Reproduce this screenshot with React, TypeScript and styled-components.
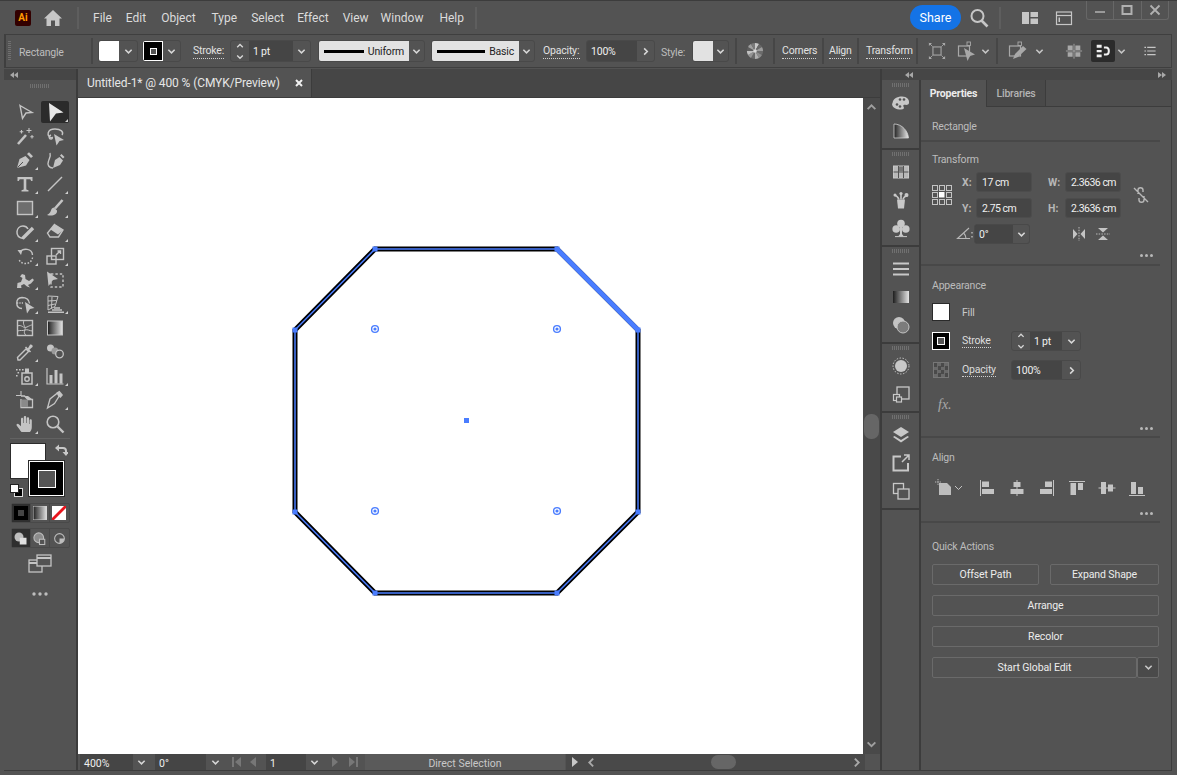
import React from "react";
import styled, { createGlobalStyle, css } from "styled-components";

const Global = createGlobalStyle`
  html, body { margin: 0; padding: 0; background: #535353; overflow: hidden; }
  #root { width: 1177px; height: 775px; }
  * { box-sizing: border-box; }
`;

const spaced = css<{ $ml?: number }>`
  margin-left: ${(p) => p.$ml ?? 0}px;
  flex: none;
`;

const Root = styled.div`
  width: 1177px;
  height: 775px;
  background: #535353;
  font-family: Roboto, "Liberation Sans", sans-serif;
  font-size: 10.5px;
  color: #cfcfcf;
  display: flex;
  flex-direction: column;
  border-top: 1px solid #3c3c3c;
  overflow: hidden;
`;

/* ---------- title bar ---------- */
const TitleBar = styled.header`
  height: 33px;
  flex: none;
  display: flex;
  align-items: center;
  position: relative;
`;
const AiLogo = styled.div`
  ${spaced};
  width: 16px;
  height: 16px;
  background: #330000;
  border-radius: 2px;
  color: #ff9a00;
  font-size: 10px;
  font-weight: 700;
  display: flex;
  align-items: center;
  justify-content: center;
`;
const TitleSep = styled.div<{ $ml?: number }>`
  ${spaced};
  width: 2px;
  height: 22px;
  background: #5e5e5e;
`;
const MenuItem = styled.span<{ $ml?: number }>`
  ${spaced};
  font-size: 12px;
  color: #dcdcdc;
`;
const ShareButton = styled.div<{ $ml?: number }>`
  ${spaced};
  width: 51px;
  height: 25px;
  border-radius: 13px;
  background: #1473e6;
  color: #fff;
  font-size: 12.5px;
  display: flex;
  align-items: center;
  justify-content: center;
`;
const WindowControls = styled.div`
  position: absolute;
  right: 8px;
  top: -1px;
  width: 83px;
  height: 20px;
  display: flex;
  border: 1px solid #676767;
  border-top: none;
  border-radius: 0 0 3px 3px;
`;
const WindowButton = styled.div`
  flex: 1;
  display: flex;
  align-items: center;
  justify-content: center;
  & + & { border-left: 1px solid #676767; }
`;

/* ---------- control bar ---------- */
const ControlBar = styled.div`
  height: 34px;
  flex: none;
  margin: 0 5px 0 4px;
  border: 1px solid #3f3f3f;
  border-left-width: 2px;
  display: flex;
  align-items: center;
`;
const Grip = styled.div<{ $ml?: number }>`
  ${spaced};
  width: 3px;
  height: 20px;
  background: repeating-linear-gradient(to bottom, #707070 0 1px, transparent 1px 2px);
`;
const BarLabel = styled.span<{ $ml?: number; $w?: number }>`
  ${spaced};
  width: ${(p) => (p.$w ? `${p.$w}px` : "auto")};
  margin-top: 2px;
  color: #bdbdbd;
  white-space: nowrap;
  letter-spacing: -0.2px;
`;
const LinkLabel = styled.span<{ $ml?: number; $w?: number }>`
  ${spaced};
  width: ${(p) => (p.$w ? `${p.$w}px` : "auto")};
  margin-top: 2px;
  color: #e2e2e2;
  white-space: nowrap;
  letter-spacing: -0.2px;
  line-height: 12px;
  padding-bottom: 1px;
  border-bottom: 1px dotted #d0d0d0;
`;
const BarSep = styled.div<{ $ml?: number }>`
  ${spaced};
  width: 2px;
  height: 26px;
  background: #464646;
`;
const Combo = styled.div<{ $ml?: number; $w: number; $h?: number }>`
  ${spaced};
  width: ${(p) => p.$w}px;
  height: ${(p) => p.$h ?? 22}px;
  border: 1px solid #494949;
  border-radius: 3px;
  display: flex;
  align-items: stretch;
  overflow: hidden;
`;
const ComboSwatch = styled.div<{ $bg: string; $w: number }>`
  width: ${(p) => p.$w}px;
  flex: none;
  background: ${(p) => p.$bg};
  display: flex;
  align-items: center;
  justify-content: center;
`;
const StrokeSwatch = styled.div`
  width: 20px;
  flex: none;
  background: #000;
  border: 1px solid #fff;
  display: flex;
  align-items: center;
  justify-content: center;
  & > i {
    display: block;
    width: 7px;
    height: 7px;
    border: 1.5px solid #fff;
    background: #555;
  }
`;
const ComboArrow = styled.div`
  flex: 1;
  min-width: 0;
  display: flex;
  align-items: center;
  justify-content: center;
  color: #d8d8d8;
  & + & { border-left: 1px solid #494949; }
`;
const ComboInput = styled.div<{ $w?: number }>`
  ${(p) => (p.$w ? `width:${p.$w}px; flex:none;` : "flex:1;")}
  background: #454545;
  color: #f0f0f0;
  padding-left: 4px;
  display: flex;
  align-items: center;
  white-space: nowrap;
  letter-spacing: -0.2px;
`;
const Stepper = styled.div`
  width: 18px;
  flex: none;
  display: flex;
  flex-direction: column;
  align-items: center;
  justify-content: center;
  gap: 3px;
  color: #d8d8d8;
`;
const ProfileBox = styled.div<{ $w: number }>`
  width: ${(p) => p.$w}px;
  flex: none;
  background: #e2e2e2;
  color: #1e1e1e;
  display: flex;
  align-items: center;
  padding: 0 5px;
  gap: 4px;
  letter-spacing: -0.2px;
  & > b {
    display: block;
    flex: 1;
    height: 3px;
    background: #000;
  }
`;
const BarIcon = styled.div<{ $ml?: number; $w?: number; $active?: boolean; $color?: string }>`
  ${spaced};
  width: ${(p) => p.$w ?? 20}px;
  height: 22px;
  display: flex;
  align-items: center;
  justify-content: center;
  color: ${(p) => p.$color ?? "#c6c6c6"};
  border-radius: 2px;
  background: ${(p) => (p.$active ? "#2b2b2b" : "transparent")};
`;

/* ---------- main ---------- */
const Main = styled.div`
  flex: 1;
  min-height: 0;
  margin: 1px 5px 4px 4px;
  display: flex;
  border-bottom: 1px solid #3c3c3c;
`;
const Toolbox = styled.aside`
  width: 72px;
  flex: none;
  display: flex;
  flex-direction: column;
  align-items: center;
  position: relative;
`;
const Strip = styled.div<{ $justify?: string; $pad?: string }>`
  height: 11px;
  flex: none;
  align-self: stretch;
  background: #464646;
  display: flex;
  align-items: center;
  justify-content: ${(p) => p.$justify ?? "flex-start"};
  padding: ${(p) => p.$pad ?? "0"};
  color: #a8a8a8;
`;
const HGrip = styled.div`
  width: 20px;
  height: 4px;
  margin-top: 4px;
  flex: none;
  background: repeating-linear-gradient(to right, #707070 0 1px, transparent 1px 2px);
`;
const ToolGrid = styled.div`
  margin-top: 12px;
  display: grid;
  grid-template-columns: 30px 30px;
  grid-auto-rows: 24px;
  flex: none;
`;
const Tool = styled.div<{ $active?: boolean; $corner?: boolean }>`
  position: relative;
  display: flex;
  align-items: center;
  justify-content: center;
  color: #c4c4c4;
  border-radius: 2px;
  background: ${(p) => (p.$active ? "#2b2b2b" : "transparent")};
  margin: ${(p) => (p.$active ? "1px 1px" : "0")};
  &::after {
    content: "";
    display: ${(p) => (p.$corner ? "block" : "none")};
    position: absolute;
    right: ${(p) => (p.$active ? "1px" : "2px")};
    bottom: ${(p) => (p.$active ? "1px" : "2px")};
    border-style: solid;
    border-width: 0 0 3px 3px;
    border-color: transparent transparent #cfcfcf transparent;
  }
`;
const ToolDivider = styled.div`
  width: 60px;
  height: 1px;
  margin-top: 2px;
  background: #626262;
  flex: none;
`;
const SwatchArea = styled.div`
  width: 60px;
  height: 55px;
  margin-top: 4px;
  position: relative;
  flex: none;
`;
const FillBig = styled.div`
  position: absolute;
  left: 0;
  top: 0;
  width: 36px;
  height: 36px;
  background: #fff;
  border: 1px solid #2c2c2c;
`;
const StrokeBig = styled.div`
  position: absolute;
  left: 19px;
  top: 18px;
  width: 35px;
  height: 35px;
  background: #000;
  border: 1px solid #fff;
  outline: 1px solid #2c2c2c;
  display: flex;
  align-items: center;
  justify-content: center;
  & > i {
    display: block;
    width: 18px;
    height: 18px;
    background: #555;
    border: 1px solid #fff;
  }
`;
const SwapIcon = styled.div`
  position: absolute;
  left: 44px;
  top: 0;
  color: #c8c8c8;
`;
const DefaultIcon = styled.div`
  position: absolute;
  left: 0;
  top: 41px;
`;
const ModeRow = styled.div<{ $mt: number }>`
  margin-top: ${(p) => p.$mt}px;
  width: 59px;
  height: 20px;
  display: flex;
  border: 1px solid #494949;
  border-radius: 2px;
  flex: none;
`;
const ModeCell = styled.div<{ $active?: boolean }>`
  flex: 1;
  display: flex;
  align-items: center;
  justify-content: center;
  color: #bdbdbd;
  background: ${(p) => (p.$active ? "#2f2f2f" : "transparent")};
  & + & { border-left: 1px solid #494949; }
`;
const Centered = styled.div<{ $mt: number; $color?: string }>`
  margin-top: ${(p) => p.$mt}px;
  flex: none;
  display: flex;
  color: ${(p) => p.$color ?? "#c4c4c4"};
`;

const Document = styled.main`
  width: 806px;
  flex: none;
  display: flex;
  flex-direction: column;
  border-left: 2px solid #3c3c3c;
  border-right: 2px solid #3c3c3c;
`;
const TabStrip = styled.div`
  height: 29px;
  flex: none;
  background: #464646;
  display: flex;
  border-bottom: 1px solid #3c3c3c;
`;
const DocTab = styled.div`
  width: 234px;
  background: #535353;
  display: flex;
  align-items: center;
  padding: 0 8px 0 9px;
  justify-content: space-between;
  color: #e6e6e6;
  font-size: 12px;
  letter-spacing: -0.1px;
  border-right: 1px solid #3c3c3c;
  white-space: nowrap;
`;
const CanvasRow = styled.div`
  flex: 1;
  min-height: 0;
  display: flex;
`;
const Canvas = styled.div`
  width: 785px;
  background: #fff;
  flex: none;
  & > svg { display: block; }
`;
const VScroll = styled.div`
  flex: 1;
  background: #494949;
  position: relative;
  color: #a0a0a0;
  display: flex;
  flex-direction: column;
  align-items: center;
  justify-content: space-between;
  padding: 4px 0;
`;
const VThumb = styled.div`
  position: absolute;
  left: 1px;
  top: 316px;
  width: 15px;
  height: 25px;
  border-radius: 7px;
  background: #666;
`;
const StatusBar = styled.div`
  height: 16px;
  flex: none;
  display: flex;
  align-items: stretch;
  background: #494949;
`;
const StatusLeft = styled.div`
  width: 488px;
  flex: none;
  background: #535353;
  display: flex;
  align-items: stretch;
`;
const StatusField = styled.div<{ $ml?: number; $w: number }>`
  ${spaced};
  width: ${(p) => p.$w}px;
  background: #454545;
  color: #efefef;
  padding: 3px 0 0 4px;
  display: flex;
  align-items: center;
`;
const StatusArrow = styled.div<{ $ml?: number; $w?: number; $color?: string }>`
  ${spaced};
  width: ${(p) => p.$w ?? 16}px;
  display: flex;
  align-items: center;
  justify-content: center;
  color: ${(p) => p.$color ?? "#d6d6d6"};
`;
const StatusText = styled.div<{ $ml?: number }>`
  ${spaced};
  width: 200px;
  background: #5a5a5a;
  padding-top: 3px;
  display: flex;
  align-items: center;
  justify-content: center;
  color: #c8c8c8;
`;
const HScroll = styled.div`
  flex: 1;
  position: relative;
  display: flex;
  align-items: center;
  justify-content: space-between;
  padding: 0 3px 0 2px;
  color: #a8a8a8;
`;
const HThumb = styled.div`
  position: absolute;
  left: 127px;
  top: 1px;
  width: 25px;
  height: 14px;
  border-radius: 7px;
  background: #666;
`;
const StatusCorner = styled.div`
  width: 15px;
  flex: none;
  background: #535353;
`;

/* ---------- right ---------- */
const RightCol = styled.div`
  flex: 1;
  min-width: 0;
  display: flex;
  flex-direction: column;
`;
const RightBody = styled.div`
  flex: 1;
  min-height: 0;
  display: flex;
`;
const Dock = styled.div`
  width: 37px;
  flex: none;
  padding-top: 1px;
  border-right: 2px solid #3c3c3c;
  box-sizing: content-box;
  display: flex;
  flex-direction: column;
`;
const DockGroup = styled.div`
  display: flex;
  flex-direction: column;
  align-items: center;
  padding-bottom: 3px;
  border-bottom: 2px solid #3c3c3c;
  & > ${HGrip} { margin-top: 2px; margin-bottom: 2px; width: 18px; height: 4px; }
`;
const DockIcon = styled.div`
  width: 100%;
  height: 28px;
  display: flex;
  align-items: center;
  justify-content: center;
  color: #c8c8c8;
`;
const Panel = styled.section`
  flex: 1;
  min-width: 0;
  display: flex;
  flex-direction: column;
  border-right: 1px solid #3c3c3c;
`;
const Tabs = styled.div`
  height: 27px;
  flex: none;
  display: flex;
  background: #4e4e4e;
  border-bottom: 1px solid #3c3c3c;
`;
const PanelTab = styled.div<{ $active?: boolean; $w: number }>`
  width: ${(p) => p.$w}px;
  height: ${(p) => (p.$active ? "27px" : "26px")};
  background: ${(p) => (p.$active ? "#535353" : "#494949")};
  color: ${(p) => (p.$active ? "#ececec" : "#b4b4b4")};
  font-weight: ${(p) => (p.$active ? 700 : 500)};
  letter-spacing: -0.2px;
  border-right: 1px solid #3c3c3c;
  display: flex;
  align-items: center;
  justify-content: center;
`;
const Section = styled.div<{ $h: number; $last?: boolean }>`
  height: ${(p) => p.$h}px;
  flex: none;
  margin-right: 11px;
  padding: 0 0 0 11px;
  border-bottom: ${(p) => (p.$last ? "none" : "2px solid #484848")};
  position: relative;
`;
const SectionTitle = styled.div<{ $top: number }>`
  padding-top: ${(p) => p.$top}px;
  height: ${(p) => p.$top + 13}px;
  line-height: 13px;
  color: #bcbcbc;
  letter-spacing: -0.2px;
`;
const TransformGrid = styled.div`
  margin-top: 6px;
  display: grid;
  grid-template-columns: 30px 14px 56px 16px 17px 56px 1fr;
  grid-template-rows: 20px 20px 20px;
  row-gap: 6px;
`;
const GridIcon = styled.div<{ $col: string; $row: string; $justify?: string }>`
  grid-column: ${(p) => p.$col};
  grid-row: ${(p) => p.$row};
  display: flex;
  align-items: center;
  justify-content: ${(p) => p.$justify ?? "flex-start"};
  gap: 10px;
  color: #c4c4c4;
`;
const FieldLabel = styled.div<{ $col: number; $row: number }>`
  grid-column: ${(p) => p.$col};
  grid-row: ${(p) => p.$row};
  display: flex;
  align-items: center;
  font-weight: 700;
  font-size: 10.5px;
  color: #b8b8b8;
`;
const Field = styled.div<{ $col: number; $row: number }>`
  grid-column: ${(p) => p.$col};
  grid-row: ${(p) => p.$row};
  background: #454545;
  border: 1px solid #4c4c4c;
  border-radius: 3px;
  color: #efefef;
  display: flex;
  align-items: center;
  padding-left: 5px;
  white-space: nowrap;
  letter-spacing: -0.5px;
`;
const AngleCombo = styled(Combo)`
  grid-column: 3;
  grid-row: 3;
  margin-left: -2px;
  height: 20px;
  background: #454545;
`;
const AngleArrow = styled(ComboArrow)`
  background: #535353;
`;
const DotsRow = styled.div<{ $b?: number }>`
  position: absolute;
  right: 7px;
  bottom: ${(p) => p.$b ?? 7}px;
  display: flex;
  gap: 2px;
  & > i {
    display: block;
    width: 3px;
    height: 3px;
    border-radius: 50%;
    background: #b8b8b8;
  }
`;
const PropRow = styled.div<{ $mt: number }>`
  margin-top: ${(p) => p.$mt}px;
  height: 20px;
  display: flex;
  align-items: center;
`;
const PropSwatch = styled.div`
  width: 18px;
  height: 18px;
  flex: none;
  background: #fff;
  border: 1px solid #2a2a2a;
`;
const PropStroke = styled.div`
  width: 18px;
  height: 18px;
  flex: none;
  background: #000;
  border: 1px solid #fff;
  display: flex;
  align-items: center;
  justify-content: center;
  & > i {
    display: block;
    width: 8px;
    height: 8px;
    background: #555;
    border: 1px solid #fff;
  }
`;
const Checker = styled.div`
  width: 16px;
  height: 16px;
  margin: 0 1px;
  flex: none;
  border: 1px solid #777;
  background: repeating-conic-gradient(#6a6a6a 0 25%, #4a4a4a 0 50%) 0 0 / 7px 7px;
`;
const PropName = styled.span<{ $ml: number; $w: number }>`
  margin-left: ${(p) => p.$ml}px;
  width: ${(p) => p.$w}px;
  color: #c8c8c8;
  letter-spacing: -0.2px;
  flex: none;
`;
const PropLink = styled.div<{ $ml: number; $w: number }>`
  margin-left: ${(p) => p.$ml}px;
  width: ${(p) => p.$w}px;
  flex: none;
  & > span {
    color: #dcdcdc;
    letter-spacing: -0.2px;
    line-height: 12px;
    border-bottom: 1px dotted #d0d0d0;
    display: inline-block;
  }
`;
const FxMark = styled.div`
  margin: 16px 0 0 6px;
  font-family: "Liberation Serif", serif;
  font-style: italic;
  font-size: 14px;
  color: #a8a8a8;
  line-height: 18px;
`;
const AlignRow = styled.div`
  margin-top: 14px;
  display: flex;
  align-items: center;
  color: #c4c4c4;
`;
const AlignIcon = styled.div<{ $w: number }>`
  width: ${(p) => p.$w}px;
  flex: none;
  display: flex;
  align-items: center;
  justify-content: center;
`;
const ActionGrid = styled.div`
  margin-top: 11px;
  width: 227px;
  display: grid;
  grid-template-columns: 107px 109px;
  column-gap: 11px;
  row-gap: 10px;
`;
const ActionButton = styled.div<{ $wide?: boolean }>`
  height: 21px;
  grid-column: ${(p) => (p.$wide ? "1 / -1" : "auto")};
  border: 1px solid #6a6a6a;
  border-radius: 2px;
  color: #ececec;
  display: flex;
  align-items: center;
  justify-content: center;
  letter-spacing: -0.1px;
`;
const SplitButton = styled.div`
  grid-column: 1 / -1;
  height: 21px;
  display: flex;
  color: #ececec;
`;
const SplitMain = styled(ActionButton)`
  flex: 1;
`;
const SplitArrow = styled.div`
  width: 22px;
  flex: none;
  border: 1px solid #6a6a6a;
  border-radius: 2px;
  background: #4a4a4a;
  color: #c8c8c8;
  display: flex;
  align-items: center;
  justify-content: center;
`;

/* ---------- small drawings ---------- */
type Dir = "down" | "up" | "left" | "right";
const Chev = ({ dir = "down", s = 9 }: { dir?: Dir; s?: number }) => {
  const pts = {
    down: "1.5,3 5,6.5 8.5,3",
    up: "1.5,6.5 5,3 8.5,6.5",
    left: "6.5,1.5 3,5 6.5,8.5",
    right: "3.5,1.5 7,5 3.5,8.5",
  }[dir];
  return (
    <svg width={s} height={s} viewBox="0 0 10 10" fill="none" stroke="currentColor" strokeWidth="1.7">
      <polyline points={pts} />
    </svg>
  );
};
const Double = ({ left }: { left?: boolean }) => (
  <svg width="8" height="6" viewBox="0 0 8 6" fill="currentColor">
    {left ? <path d="M4 0V6L0 3ZM8 0V6L4 3Z" /> : <path d="M0 0V6L4 3ZM4 0V6L8 3Z" />}
  </svg>
);
const Dots = ({ b }: { b?: number }) => (
  <DotsRow $b={b}>
    <i />
    <i />
    <i />
  </DotsRow>
);
const I = ({ children, s = 20 }: { children: React.ReactNode; s?: number }) => (
  <svg
    width={s}
    height={s}
    viewBox="0 0 20 20"
    fill="none"
    stroke="currentColor"
    strokeWidth="1.4"
    style={{ display: "block", flex: "none" }}
  >
    {children}
  </svg>
);
const F = { fill: "currentColor", stroke: "none" } as const;

const toolIcons: Record<string, React.ReactNode> = {
  select: <path d="M5 3.5 17 10.5 11 11 7.5 16.5Z" />,
  direct: <path d="M4 1 18.5 10.5 11 11.5 5 19.5Z" fill="#e8e8e8" stroke="none" />,
  wand: (
    <>
      <path d="M3 18 11 9" strokeWidth="2.6" />
      <path d="M14 2v5M11.5 4.5h5M6.5 4v3.6M4.7 5.8h3.6M17 9v3.4M15.3 10.7h3.4" strokeWidth="1.1" />
    </>
  ),
  lasso: (
    <>
      <path d="M7 12C1 10 2 3 10 3c6 0 9 3 7 6" />
      <path d="M6 9c-3 1-2 4 0 4 1 0 2-1 1-2" />
      <path d="M9 8 19 14 14.5 15 11.5 19.5Z" {...F} />
    </>
  ),
  pen: (
    <>
      <path d="M2 18 4.5 9 10.5 6 14.5 10 11 15.5Z" {...F} />
      <path d="M12 4 14 2.2 18 6.2 16 8Z" {...F} />
      <path d="M2.5 17.5 8 12" stroke="#535353" strokeWidth="1" />
    </>
  ),
  curvature: (
    <>
      <path d="M8 18 10 10 14.5 7 18 10.5 15 15Z" {...F} />
      <path d="M15 5.5 16.5 4 19.5 7 18 8.5Z" {...F} />
      <path d="M8 18C4 18 2 15 3.5 11 4.5 8 6 6 5 3" />
    </>
  ),
  type: <path d="M2.5 3H17.5V7H16.2L15.3 5.2H11.3V15.6L13.5 16.2V17.5H6.5V16.2L8.7 15.6V5.2H4.7L3.8 7H2.5Z" {...F} />,
  line: <path d="M3 17 17 3" />,
  rect: <rect x="2.5" y="3.5" width="15" height="13" fill="#6e6e6e" />,
  brush: (
    <>
      <path d="M17.5 2 10 10.5" strokeWidth="2.6" />
      <path d="M9 9.5C5 10 7 15 2 17 7 18.5 12.5 17 12 12.5Z" {...F} />
    </>
  ),
  shaper: (
    <>
      <path d="M8 16.5C-1 15 1 4 8 4c2 0 4 1 5 3" strokeWidth="1.5" />
      <path d="M7.5 16.5 18 6" strokeWidth="3.4" />
    </>
  ),
  eraser: (
    <>
      <path d="M9.5 2.5 18 8 13.5 15 5 15 2.5 11Z" />
      <path d="M9.5 2.5 18 8 13 12.5 5.5 7.5Z" {...F} />
    </>
  ),
  rotate: (
    <>
      <path d="M5 6C8 2 17 2 17.5 9" />
      <path d="M17.5 11.5c-.5 4-4 6.5-8 6-3-.5-5-2-6-5" strokeDasharray="1.6 1.6" />
      <path d="M2.5 4 7.5 4 6 9Z" {...F} />
    </>
  ),
  scale: (
    <>
      <rect x="2" y="10" width="9" height="8" />
      <rect x="6.5" y="2.5" width="12" height="11" />
      <path d="M11 9 15 5M12.5 5H15.5V8" />
    </>
  ),
  warp: (
    <path
      d="M2 18 2.5 13 6 12 7.5 8 5 6.5 7 4 10 5 10.5 9 14 11 17.5 8.5 19 10 16 13.5 13 15 15 17.5 12 16.5 9 14 6 15.5 6.5 18Z"
      {...F}
    />
  ),
  free: (
    <>
      <rect x="6" y="4" width="12" height="13" strokeDasharray="2.4 2" />
      <path d="M2 1.5 13 9 8 10 3.5 16Z" {...F} />
    </>
  ),
  shapeb: (
    <>
      <path d="M7 14.5C0 14 0 4 7 3.5c4 0 7 2 7.5 6" />
      <path d="M2 9H9" strokeDasharray="1.2 1.2" />
      <path d="M10 8 19.5 14 15 15 12 19.5Z" {...F} />
    </>
  ),
  persp: (
    <>
      <path d="M3 2V16L10 12.5 13 2.5ZM3 7 11.5 6.5M3 11.5 10 10M7 3 6.5 14.5" strokeWidth="1" />
      <path d="M9 14H15M7 16H17M3 18.2H19" strokeWidth="1.5" />
    </>
  ),
  mesh: (
    <>
      <rect x="2.5" y="2.5" width="15" height="15" />
      <path d="M2.5 8C7 6 8 11 12 9s4-2 5.5-2M9 2.5c-2 4 2 6 1 9S9 15 11 17.5M2.5 13c3-1 5 0 7.5-1s5 1 7.5 1" strokeWidth="1" />
    </>
  ),
  gradient: <rect x="2.5" y="3" width="15" height="14" fill="url(#gr)" stroke="#c4c4c4" strokeWidth="1" />,
  dropper: (
    <>
      <path d="M3 18 2.5 15.5 11 7 13.5 9.5 5 18Z" />
      <path d="M11 5.5 12.5 7 15 2.8C16 1.6 18.5 3.5 17.5 5L13.5 8.5 15 10" {...F} />
      <path d="M10.5 5 15.5 10" strokeWidth="1.6" />
    </>
  ),
  blend: (
    <>
      <circle cx="5.5" cy="6" r="3.5" {...F} />
      <circle cx="10" cy="9" r="3.5" fill="#9a9a9a" stroke="none" />
      <circle cx="14.5" cy="12" r="3.8" fill="#535353" strokeWidth="1.3" />
    </>
  ),
  spray: (
    <>
      <path d="M7 7H17V18H7Z" strokeWidth="1.5" />
      <circle cx="12" cy="13" r="2.2" strokeWidth="1.4" />
      <path d="M10 2.5h4V7H10Z" {...F} />
      <path d="M1 3h1.6v1.6H1ZM4 3h1.6v1.6H4ZM7 3h1.6v1.6H7ZM2.5 6h1.6v1.6H2.5ZM1 9h1.6v1.6H1Z" {...F} />
    </>
  ),
  graph: (
    <>
      <path d="M2 2V18H18.5" strokeWidth="1.2" />
      <path d="M4.5 9H7.5V17.5H4.5ZM9.5 4H12.5V17.5H9.5ZM14.5 7.5H17.5V17.5H14.5Z" {...F} />
    </>
  ),
  artboard: (
    <>
      <path d="M6 1V6M1 5.5H6" strokeWidth="1.1" />
      <path d="M6 9V17.5H17.5V9.5H13L9.5 6H6" strokeWidth="1.3" />
      <path d="M6.5 9.5H13V17H6.5Z" fill="#8a8a8a" stroke="none" />
      <path d="M9.5 6 13 6 17.5 9.5 13 10Z" {...F} />
    </>
  ),
  slice: (
    <>
      <path d="M2.5 18 5 9 12.5 3 14.5 5.5 9.5 13.5Z" strokeWidth="1.3" />
      <path d="M11.5 2.5 14.5 0.8 18 5 15.5 8 13 6Z" {...F} />
    </>
  ),
  hand: (
    <path
      d="M6.5 18C5 16.5 3.6 14 1.8 11.8c-1-1.4.8-2.8 2.2-1.4L6 12.2V5c0-1.7 2.2-1.7 2.2 0v4h.6V3.4c0-1.8 2.4-1.8 2.4 0V9h.6V4.4c0-1.7 2.3-1.7 2.3 0V10h.5V6.5c0-1.6 2.2-1.6 2.2 0V13c0 2.5-1 4-2 5Z"
      {...F}
    />
  ),
  zoom: (
    <>
      <circle cx="8" cy="8" r="5.8" strokeWidth="1.6" />
      <path d="M12.5 12.5 18.5 18.5" strokeWidth="2.4" />
    </>
  ),
};
const tools: [string, boolean, boolean?][] = [
  ["select", false],
  ["direct", true, true],
  ["wand", false],
  ["lasso", false],
  ["pen", true],
  ["curvature", false],
  ["type", true],
  ["line", true],
  ["rect", true],
  ["brush", true],
  ["shaper", true],
  ["eraser", true],
  ["rotate", true],
  ["scale", true],
  ["warp", true],
  ["free", false],
  ["shapeb", true],
  ["persp", true],
  ["mesh", false],
  ["gradient", false],
  ["dropper", true],
  ["blend", false],
  ["spray", true],
  ["graph", true],
  ["artboard", false],
  ["slice", true],
  ["hand", true],
  ["zoom", false],
];

const dockGroups: React.ReactNode[][] = [
  [
    <>
      <path d="M1.5 10.5C1.5 6 6 3.5 11 3.5s7.5 3 7 6.5c-.4 2.4-3 2-4.5 1.8-1.4-.1-1.5 1.2-.8 2.2.8 1.2-.2 2.5-2.7 2.5-5 0-9-2-9-6Z" {...F} />
      <circle cx="6" cy="11.5" r="1.3" fill="#535353" stroke="none" />
      <circle cx="9" cy="13.5" r="1.3" fill="#535353" stroke="none" />
      <circle cx="13" cy="6.5" r="1.3" fill="#535353" stroke="none" />
      <circle cx="9" cy="6.5" r="1.3" fill="#535353" stroke="none" />
    </>,
    <>
      <path d="M3 3C11 3 17 10 17.5 17H3Z" fill="url(#fan)" stroke="#d0d0d0" strokeWidth="0.8" />
    </>,
  ],
  [
    <>
      <rect x="2.5" y="4" width="15" height="12" fill="#b8b8b8" stroke="#c8c8c8" strokeWidth="1" />
      <path d="M2.5 10H17.5M7.5 4V16M12.5 4V16" stroke="#535353" strokeWidth="1" />
      <rect x="8" y="4.5" width="4" height="5" fill="#777" stroke="none" />
    </>,
    <>
      <path d="M6 9.5H14L13 18.5H7Z" {...F} />
      <path d="M8 9.5C7 7 5.5 5.5 3 5M10 9.5V3M12 9.5C12.5 7 14 6 17 5.5" strokeWidth="1.6" />
      <circle cx="10" cy="3.5" r="1.6" {...F} />
      <circle cx="15.5" cy="5" r="2" {...F} />
      <circle cx="4" cy="5" r="1.5" {...F} />
    </>,
    <>
      <circle cx="10" cy="5.5" r="3.8" {...F} />
      <circle cx="5.2" cy="11" r="3.8" {...F} />
      <circle cx="14.8" cy="11" r="3.8" {...F} />
      <path d="M9 9H11V16L12.5 18H7.5L9 16Z" {...F} />
      <path d="M4 18.6H16" strokeWidth="1" />
    </>,
  ],
  [
    <>
      <path d="M2 4.5H18M2 10H18M2 15.5H18" strokeWidth="2.2" />
    </>,
    <rect x="2" y="4" width="16" height="12" fill="url(#gr)" stroke="none" />,
    <>
      <circle cx="8" cy="8" r="6" fill="#c4c4c4" stroke="none" />
      <circle cx="12" cy="12" r="6" fill="#7c7c7c" stroke="#c4c4c4" strokeWidth="1" />
    </>,
  ],
  [
    <>
      <circle cx="10" cy="10" r="8" strokeDasharray="1.5 1.5" strokeWidth="1" />
      <circle cx="10" cy="10" r="6" {...F} />
    </>,
    <>
      <rect x="6" y="3" width="12" height="12" strokeWidth="1.3" />
      <rect x="2.5" y="10.5" width="6" height="6" fill="#535353" strokeWidth="1.2" />
      <rect x="5.5" y="13" width="5" height="5" fill="#535353" strokeWidth="1.2" />
    </>,
  ],
  [
    <>
      <path d="M10 2 18 7 10 12 2 7Z" {...F} />
      <path d="M3.5 11 2 12 10 17.5 18 12 16.5 11 10 15Z" {...F} />
    </>,
    <>
      <path d="M10 3.5H2.5V17.5H17V10" strokeWidth="2" />
      <path d="M11 9 18 2M13 2H18V7" strokeWidth="1.5" />
    </>,
    <>
      <rect x="2.5" y="2.5" width="10" height="10" strokeWidth="1.3" />
      <rect x="7" y="8" width="11" height="10" fill="#535353" strokeWidth="1.3" />
    </>,
  ],
];

const align: [number, React.ReactNode][] = [
  [
    40,
    <svg width="36" height="20" viewBox="0 0 36 20" fill="none" stroke="currentColor">
      <path d="M4 1V7M1 4H7" strokeWidth="0.9" strokeDasharray="1.3 1" />
      <path d="M5 5H13L17 9V17H5Z" fill="#bdbdbd" stroke="none" />
      <polyline points="21,8 24.5,11.5 28,8" strokeWidth="1" />
    </svg>,
  ],
  [
    30,
    <I>
      <path d="M3.5 2V18" strokeWidth="1" />
      <path d="M5 3.5H12V9H5ZM5 11H17V16H5Z" {...F} />
    </I>,
  ],
  [
    30,
    <I>
      <path d="M10 2V18" strokeWidth="1" />
      <path d="M6.5 4H13.5V9H6.5ZM3.5 11H16.5V16H3.5Z" {...F} />
    </I>,
  ],
  [
    30,
    <I>
      <path d="M16.5 2V18" strokeWidth="1" />
      <path d="M8 3.5H15V9H8ZM3 11H15V16H3Z" {...F} />
    </I>,
  ],
  [
    30,
    <I>
      <path d="M2 3.5H18" strokeWidth="1" />
      <path d="M3.5 5H9V17H3.5ZM11 5H16V12H11Z" {...F} />
    </I>,
  ],
  [
    30,
    <I>
      <path d="M1.5 10H18.5" strokeWidth="1" />
      <path d="M4 4H9V16H4ZM11 6.5H16V13.5H11Z" {...F} />
    </I>,
  ],
  [
    30,
    <I>
      <path d="M2 17.5H18" strokeWidth="1" />
      <path d="M4 4H9V16H4ZM11 9H16V16H11Z" {...F} />
    </I>,
  ],
];

const wedges = [0, 1, 2, 3, 4, 5, 6, 7, 8, 9, 10, 11].map((i) => {
  const a0 = (i * 30 * Math.PI) / 180;
  const a1 = ((i + 1) * 30 * Math.PI) / 180;
  const shades = ["#6c6c6c", "#8c8c8c", "#b0b0b0", "#6a6a6a", "#949494", "#c0c0c0", "#5e5e5e", "#a0a0a0", "#7a7a7a", "#c8c8c8", "#686868", "#9c9c9c"];
  return {
    d: `M10 10L${(10 + 9 * Math.cos(a0)).toFixed(2)} ${(10 + 9 * Math.sin(a0)).toFixed(2)}A9 9 0 0 1 ${(10 + 9 * Math.cos(a1)).toFixed(2)} ${(10 + 9 * Math.sin(a1)).toFixed(2)}Z`,
    c: shades[i],
  };
});

const octagon = "297,151 479,151 560,232 560,414 479,495 297,495 217,414 217,232";
const anchors = octagon.split(" ").map((s) => s.split(",").map(Number));
const BLUE = "#4a7dff";

export default function App() {
  return (
    <Root>
      <Global />
      <svg width="0" height="0" style={{ position: "absolute" }}>
        <defs>
          <linearGradient id="gr">
            <stop offset="0" stopColor="#1e1e1e" />
            <stop offset="1" stopColor="#e4e4e4" />
          </linearGradient>
          <linearGradient id="fan" x1="0" y1="0" x2="1" y2="0">
            <stop offset="0" stopColor="#222" />
            <stop offset="1" stopColor="#e8e8e8" />
          </linearGradient>
        </defs>
      </svg>

      <TitleBar>
        <AiLogo $ml={15}>Ai</AiLogo>
        <BarIcon $ml={12} $w={20}>
          <I>
            <path d="M10 2 19 10.5H16.5V18H12V12.5H8V18H3.5V10.5H1Z" {...F} />
          </I>
        </BarIcon>
        <TitleSep $ml={14} />
        <MenuItem $ml={14}>File</MenuItem>
        <MenuItem $ml={14}>Edit</MenuItem>
        <MenuItem $ml={15}>Object</MenuItem>
        <MenuItem $ml={16}>Type</MenuItem>
        <MenuItem $ml={14}>Select</MenuItem>
        <MenuItem $ml={13}>Effect</MenuItem>
        <MenuItem $ml={14}>View</MenuItem>
        <MenuItem $ml={12}>Window</MenuItem>
        <MenuItem $ml={16}>Help</MenuItem>
        <TitleSep $ml={11} />
        <ShareButton $ml={433}>Share</ShareButton>
        <BarIcon $ml={8} $w={20}>
          <I>
            <circle cx="8.5" cy="8" r="6" strokeWidth="2" />
            <path d="M12.5 12.5 18.5 18.5" strokeWidth="2.6" />
          </I>
        </BarIcon>
        <TitleSep $ml={10} />
        <BarIcon $ml={19} $w={20}>
          <I>
            <path d="M2 4H9V16H2ZM10.5 4H18V9H10.5ZM10.5 10.5H18V16H10.5Z" {...F} />
          </I>
        </BarIcon>
        <BarIcon $ml={14} $w={20}>
          <I>
            <rect x="2.5" y="4" width="15" height="12.5" strokeWidth="1.2" />
            <path d="M2.5 7.5H17.5" strokeWidth="1.2" />
            <path d="M4.5 9.5H6V14H4.5Z" {...F} />
          </I>
        </BarIcon>
        <WindowControls>
          <WindowButton>
            <svg width="12" height="12" viewBox="0 0 12 12"><path d="M1 8H11" stroke="#9a9a9a" strokeWidth="2" /></svg>
          </WindowButton>
          <WindowButton>
            <svg width="12" height="12" viewBox="0 0 12 12"><rect x="1.5" y="2" width="9" height="8" fill="none" stroke="#b0b0b0" strokeWidth="2" /></svg>
          </WindowButton>
          <WindowButton>
            <svg width="12" height="12" viewBox="0 0 12 12"><path d="M1.5 1.5 10.5 10.5M10.5 1.5 1.5 10.5" stroke="#b0b0b0" strokeWidth="1.8" /></svg>
          </WindowButton>
        </WindowControls>
      </TitleBar>

      <ControlBar>
        <Grip $ml={2} />
        <BarLabel $ml={8} $w={72}>Rectangle</BarLabel>
        <BarSep />
        <Combo $ml={5} $w={40}>
          <ComboSwatch $bg="#fff" $w={20} />
          <ComboArrow><Chev /></ComboArrow>
        </Combo>
        <Combo $ml={4} $w={39}>
          <StrokeSwatch><i /></StrokeSwatch>
          <ComboArrow><Chev /></ComboArrow>
        </Combo>
        <LinkLabel $ml={12} $w={31}>Stroke:</LinkLabel>
        <Combo $ml={6} $w={81}>
          <Stepper><Chev dir="up" s={8} /><Chev s={8} /></Stepper>
          <ComboInput $w={44}>1 pt</ComboInput>
          <ComboArrow><Chev /></ComboArrow>
        </Combo>
        <Combo $ml={7} $w={107}>
          <ProfileBox $w={90}><b />Uniform</ProfileBox>
          <ComboArrow><Chev /></ComboArrow>
        </Combo>
        <Combo $ml={6} $w={104}>
          <ProfileBox $w={87}><b />Basic</ProfileBox>
          <ComboArrow><Chev /></ComboArrow>
        </Combo>
        <LinkLabel $ml={8} $w={37}>Opacity:</LinkLabel>
        <Combo $ml={6} $w={69}>
          <ComboInput $w={50}>100%</ComboInput>
          <ComboArrow><Chev dir="right" /></ComboArrow>
        </Combo>
        <BarLabel $ml={6} $w={24}>Style:</BarLabel>
        <Combo $ml={7} $w={37}>
          <ComboSwatch $bg="#e2e2e2" $w={20} />
          <ComboArrow><Chev /></ComboArrow>
        </Combo>
        <BarSep $ml={6} />
        <BarIcon $ml={9} $w={18}>
          <I s={18}>
            {wedges.map((w) => (
              <path key={w.d} d={w.d} fill={w.c} stroke="none" />
            ))}
            <circle cx="10" cy="10" r="2" fill="#d8d8d8" stroke="none" />
          </I>
        </BarIcon>
        <BarSep $ml={9} />
        <LinkLabel $ml={7} $w={34}>Corners</LinkLabel>
        <BarSep $ml={6} />
        <LinkLabel $ml={5} $w={22}>Align</LinkLabel>
        <BarSep $ml={6} />
        <LinkLabel $ml={7} $w={44}>Transform</LinkLabel>
        <BarSep $ml={6} />
        <BarIcon $ml={9} $color="#a8a8a8">
          <I s={18}>
            <rect x="5.5" y="5.5" width="9" height="9" strokeWidth="1.2" />
            <path d="M1 1 5 5M19 1 15 5M1 19 5 15M19 19 15 15" strokeWidth="1" />
            <path d="M1 1H4.5L1 4.5ZM19 1H15.5L19 4.5ZM1 19H4.5L1 15.5ZM19 19H15.5L19 15.5Z" {...F} />
          </I>
        </BarIcon>
        <BarIcon $ml={10} $color="#a8a8a8">
          <I>
            <rect x="1.5" y="5" width="11" height="10" strokeWidth="1.2" />
            <rect x="10" y="1" width="3.5" height="3.5" strokeWidth="0.9" />
            <path d="M7 7 18 13.5 13 15 10.5 20Z" {...F} />
          </I>
        </BarIcon>
        <BarIcon $ml={3} $w={10}><Chev /></BarIcon>
        <BarSep $ml={6} />
        <BarIcon $ml={10} $color="#a8a8a8">
          <I>
            <rect x="1.5" y="5" width="11" height="10" strokeWidth="1.2" />
            <rect x="10" y="1" width="3.5" height="3.5" strokeWidth="0.9" />
            <path d="M5 18 7 13 15 5 18.5 8 10 16Z" {...F} />
          </I>
        </BarIcon>
        <BarIcon $ml={6} $w={10}><Chev /></BarIcon>
        <BarIcon $ml={20}>
          <I s={18}>
            <path d="M3 4H8.5V9H3ZM11.5 4H17V9H11.5ZM3 11.5H8.5V16.5H3ZM11.5 11.5H17V16.5H11.5Z" fill="#a8a8a8" stroke="none" />
            <path d="M10 2V18.5M1 10H19" stroke="#a8a8a8" strokeWidth="1" />
          </I>
        </BarIcon>
        <BarIcon $ml={7} $w={24} $active>
          <I s={18}>
            <path d="M3 3H8.5V6.5H3ZM3 9H8.5V11.5H3ZM3 14H8.5V17H3Z" fill="#f0f0f0" stroke="none" />
            <path d="M11 6H13.5C17.5 6 17.5 14 13.5 14H11" stroke="#f0f0f0" strokeWidth="2.2" />
          </I>
        </BarIcon>
        <BarIcon $ml={1} $w={10}><Chev /></BarIcon>
        <BarIcon $ml={14}>
          <I s={16}>
            <path d="M3 5.5H5M3 10H5M3 14.5H5" strokeWidth="1.5" />
            <path d="M6.5 5.5H17M6.5 10H17M6.5 14.5H17" strokeWidth="1.5" />
          </I>
        </BarIcon>
      </ControlBar>

      <Main>
        <Toolbox>
          <Strip $pad="0 0 0 6px"><Double left /></Strip>
          <HGrip />
          <ToolGrid>
            {tools.map(([k, corner, active]) => (
              <Tool key={k} $corner={corner} $active={active}>
                <I>{toolIcons[k]}</I>
              </Tool>
            ))}
          </ToolGrid>
          <ToolDivider />
          <SwatchArea>
            <FillBig />
            <StrokeBig><i /></StrokeBig>
            <SwapIcon>
              <svg width="14" height="14" viewBox="0 0 14 14" fill="none" stroke="currentColor" strokeWidth="2">
                <path d="M2 5H9C11 5 12 6 12 8V11" />
                <path d="M5 1.5 1 5 5 8.5" fill="currentColor" stroke="none" />
                <path d="M8.5 9 12 13 15 9" fill="currentColor" stroke="none" />
              </svg>
            </SwapIcon>
            <DefaultIcon>
              <svg width="13" height="13" viewBox="0 0 13 13">
                <rect x="4.5" y="4.5" width="8" height="8" fill="#000" stroke="#ddd" />
                <rect x="0.5" y="0.5" width="8" height="8" fill="#fff" stroke="#222" />
              </svg>
            </DefaultIcon>
          </SwatchArea>
          <ModeRow $mt={5}>
            <ModeCell $active>
              <svg width="14" height="14"><rect width="14" height="14" fill="#000" /><rect x="4" y="4" width="6" height="6" fill="#444" /></svg>
            </ModeCell>
            <ModeCell>
              <svg width="14" height="14"><rect width="14" height="14" fill="url(#gr)" stroke="#ccc" /></svg>
            </ModeCell>
            <ModeCell>
              <svg width="14" height="14"><rect width="14" height="14" fill="#fff" /><path d="M0 12 12 0H14V2L2 14H0Z" fill="#e8141c" /></svg>
            </ModeCell>
          </ModeRow>
          <ModeRow $mt={5}>
            <ModeCell $active>
              <I s={15}><circle cx="8" cy="8" r="6" fill="#bdbdbd" stroke="none" /><rect x="9" y="9" width="9" height="9" fill="#e0e0e0" stroke="none" /></I>
            </ModeCell>
            <ModeCell>
              <I s={15}><circle cx="9" cy="9" r="6.5" fill="#8c8c8c" stroke="#bdbdbd" /><rect x="10" y="11" width="7" height="7" fill="#535353" stroke="#bdbdbd" /></I>
            </ModeCell>
            <ModeCell>
              <I s={15}><circle cx="10" cy="10" r="6.5" fill="#535353" stroke="#bdbdbd" /><path d="M10 10H16.5A6.5 6.5 0 0 1 10 16.5Z" fill="#bdbdbd" stroke="none" /></I>
            </ModeCell>
          </ModeRow>
          <Centered $mt={6}>
            <svg width="24" height="20" viewBox="0 0 24 20" fill="none" stroke="currentColor" strokeWidth="1.3">
              <rect x="1" y="6" width="13" height="12" />
              <rect x="9" y="1" width="14" height="11" fill="#535353" />
              <path d="M9 4H23M1 9H9" strokeWidth="1.8" />
            </svg>
          </Centered>
          <Centered $mt={18} $color="#bdbdbd">
            <svg width="16" height="4" viewBox="0 0 16 4" fill="currentColor">
              <circle cx="2" cy="2" r="1.7" /><circle cx="8" cy="2" r="1.7" /><circle cx="14" cy="2" r="1.7" />
            </svg>
          </Centered>
        </Toolbox>

        <Document>
          <TabStrip>
            <DocTab>
              Untitled-1* @ 400 % (CMYK/Preview)
              <svg width="8" height="8" viewBox="0 0 8 8">
                <path d="M1 1 7 7M7 1 1 7" stroke="#f0f0f0" strokeWidth="2" />
              </svg>
            </DocTab>
          </TabStrip>
          <CanvasRow>
            <Canvas>
              <svg width="785" height="656" viewBox="0 0 785 656">
                <polygon points={octagon} fill="#fff" stroke="#000" strokeWidth="5" />
                <polygon points={octagon} fill="none" stroke={BLUE} strokeWidth="1.5" />
                <line x1="479" y1="151" x2="560" y2="232" stroke={BLUE} strokeWidth="5" />
                {anchors.map(([x, y]) => (
                  <rect key={`${x}-${y}`} x={x - 2.5} y={y - 2.5} width="5" height="5" fill={BLUE} />
                ))}
                {[[297, 231], [479, 231], [297, 413], [479, 413]].map(([x, y]) => (
                  <g key={`${x}${y}`}>
                    <circle cx={x} cy={y} r="3.4" fill="#fff" stroke={BLUE} strokeWidth="1.4" />
                    <circle cx={x} cy={y} r="1.6" fill={BLUE} />
                  </g>
                ))}
                <rect x="386" y="320" width="5" height="5" fill={BLUE} />
              </svg>
            </Canvas>
            <VScroll>
              <Chev dir="up" s={11} />
              <VThumb />
              <Chev s={11} />
            </VScroll>
          </CanvasRow>
          <StatusBar>
            <StatusLeft>
              <StatusField $ml={2} $w={53}>400%</StatusField>
              <StatusArrow><Chev /></StatusArrow>
              <StatusField $ml={6} $w={51}>0°</StatusField>
              <StatusArrow $ml={1}><Chev /></StatusArrow>
              <StatusArrow $ml={6} $color="#777">
                <svg width="11" height="10" viewBox="0 0 11 10" fill="currentColor"><path d="M0 0H2V10H0ZM9 0V10L3 5Z" /></svg>
              </StatusArrow>
              <StatusArrow $color="#777">
                <svg width="8" height="10" viewBox="0 0 8 10" fill="currentColor"><path d="M7 0V10L1 5Z" /></svg>
              </StatusArrow>
              <StatusField $ml={5} $w={40}>1</StatusField>
              <StatusArrow><Chev /></StatusArrow>
              <StatusArrow $ml={5} $color="#777">
                <svg width="8" height="10" viewBox="0 0 8 10" fill="currentColor"><path d="M1 0V10L7 5Z" /></svg>
              </StatusArrow>
              <StatusArrow $ml={1} $color="#777">
                <svg width="11" height="10" viewBox="0 0 11 10" fill="currentColor"><path d="M2 0V10L8 5ZM9 0H11V10H9Z" /></svg>
              </StatusArrow>
              <StatusText $ml={5}>Direct Selection</StatusText>
            </StatusLeft>
            <StatusArrow $w={18} $color="#c8c8c8">
              <svg width="8" height="10" viewBox="0 0 8 10" fill="currentColor"><path d="M1 0V10L7 5Z" /></svg>
            </StatusArrow>
            <HScroll>
              <Chev dir="left" s={11} />
              <HThumb />
              <Chev dir="right" s={11} />
            </HScroll>
            <StatusCorner />
          </StatusBar>
        </Document>

        <RightCol>
          <Strip $justify="space-between" $pad="0 6px 0 23px">
            <Double left />
            <Double />
          </Strip>
          <RightBody>
            <Dock>
              {dockGroups.map((g, i) => (
                <DockGroup key={i}>
                  <HGrip />
                  {g.map((ic, j) => (
                    <DockIcon key={j}><I>{ic}</I></DockIcon>
                  ))}
                </DockGroup>
              ))}
            </Dock>
            <Panel>
              <Tabs>
                <PanelTab $active $w={66}>Properties</PanelTab>
                <PanelTab $w={59}>Libraries</PanelTab>
              </Tabs>
              <Section $h={35}>
                <SectionTitle $top={13}>Rectangle</SectionTitle>
              </Section>
              <Section $h={124}>
                <SectionTitle $top={11}>Transform</SectionTitle>
                <TransformGrid>
                  <GridIcon $col="1" $row="1 / 3">
                    <svg width="20" height="20" viewBox="0 0 20 20" fill="none" stroke="#c4c4c4" strokeWidth="1">
                      {[0, 7, 14].flatMap((y) =>
                        [0, 7, 14].map((x) =>
                          x === 7 && y === 7 ? (
                            <rect key="c" x="7" y="7" width="5.5" height="5.5" fill="#fff" stroke="none" />
                          ) : (
                            <rect key={`${x}${y}`} x={x + 0.5} y={y + 0.5} width="5" height="5" />
                          )
                        )
                      )}
                    </svg>
                  </GridIcon>
                  <FieldLabel $col={2} $row={1}>X:</FieldLabel>
                  <Field $col={3} $row={1}>17 cm</Field>
                  <FieldLabel $col={5} $row={1}>W:</FieldLabel>
                  <Field $col={6} $row={1}>2.3636 cm</Field>
                  <GridIcon $col="7" $row="1 / 3" $justify="flex-end">
                    <svg width="18" height="18" viewBox="0 0 18 18" fill="none" stroke="#b8b8b8" strokeWidth="1.4" style={{ marginRight: 10 }}>
                      <path d="M6 8V4C6 1 11 1 11 4V6M12 10V14C12 17 7 17 7 14V12M2 2 16 16" />
                    </svg>
                  </GridIcon>
                  <FieldLabel $col={2} $row={2}>Y:</FieldLabel>
                  <Field $col={3} $row={2}>2.75 cm</Field>
                  <FieldLabel $col={5} $row={2}>H:</FieldLabel>
                  <Field $col={6} $row={2}>2.3636 cm</Field>
                  <GridIcon $col="1 / 3" $row="3" $justify="flex-end">
                    <svg width="18" height="14" viewBox="0 0 18 14" fill="none" stroke="#b8b8b8" strokeWidth="1.1" style={{ marginRight: 2 }}>
                      <path d="M13 1 1.5 11.5H14M8 6.5C9.5 8 10 9.5 10 11.5" />
                      <path d="M16 5V6.5M16 9V10.5" strokeWidth="1.4" />
                    </svg>
                  </GridIcon>
                  <AngleCombo $w={56}>
                    <ComboInput $w={38}>0°</ComboInput>
                    <AngleArrow><Chev /></AngleArrow>
                  </AngleCombo>
                  <GridIcon $col="5 / 7" $row="3" $justify="center">
                    <svg width="14" height="14" viewBox="0 0 14 14" fill="#c4c4c4" style={{ marginLeft: 12 }}>
                      <path d="M1 2V12L5.5 7ZM13 2V12L8.5 7Z" />
                      <path d="M7 0V14" stroke="#c4c4c4" strokeDasharray="1.5 1.2" strokeWidth="0.9" />
                    </svg>
                    <svg width="14" height="14" viewBox="0 0 14 14" fill="#c4c4c4">
                      <path d="M2 1H12L7 5.5ZM2 13H12L7 8.5Z" />
                      <path d="M0 7H14" stroke="#c4c4c4" strokeDasharray="1.5 1.2" strokeWidth="0.9" />
                    </svg>
                  </GridIcon>
                </TransformGrid>
                <Dots />
              </Section>
              <Section $h={172}>
                <SectionTitle $top={13}>Appearance</SectionTitle>
                <PropRow $mt={10}>
                  <PropSwatch />
                  <PropName $ml={12} $w={40}>Fill</PropName>
                </PropRow>
                <PropRow $mt={9}>
                  <PropStroke><i /></PropStroke>
                  <PropLink $ml={12} $w={49}><span>Stroke</span></PropLink>
                  <Combo $w={70} $h={20}>
                    <Stepper><Chev dir="up" s={8} /><Chev s={8} /></Stepper>
                    <ComboInput $w={32}>1 pt</ComboInput>
                    <ComboArrow><Chev /></ComboArrow>
                  </Combo>
                </PropRow>
                <PropRow $mt={9}>
                  <Checker />
                  <PropLink $ml={12} $w={49}><span>Opacity</span></PropLink>
                  <Combo $w={70} $h={20}>
                    <ComboInput $w={50}>100%</ComboInput>
                    <ComboArrow><Chev dir="right" /></ComboArrow>
                  </Combo>
                </PropRow>
                <FxMark>fx.</FxMark>
                <Dots b={6} />
              </Section>
              <Section $h={85}>
                <SectionTitle $top={13}>Align</SectionTitle>
                <AlignRow>
                  {align.map(([w, n], i) => (
                    <AlignIcon key={i} $w={w}>{n}</AlignIcon>
                  ))}
                </AlignRow>
                <Dots b={6} />
              </Section>
              <Section $h={170} $last>
                <SectionTitle $top={17}>Quick Actions</SectionTitle>
                <ActionGrid>
                  <ActionButton>Offset Path</ActionButton>
                  <ActionButton>Expand Shape</ActionButton>
                  <ActionButton $wide>Arrange</ActionButton>
                  <ActionButton $wide>Recolor</ActionButton>
                  <SplitButton>
                    <SplitMain>Start Global Edit</SplitMain>
                    <SplitArrow><Chev /></SplitArrow>
                  </SplitButton>
                </ActionGrid>
              </Section>
            </Panel>
          </RightBody>
        </RightCol>
      </Main>
    </Root>
  );
}
